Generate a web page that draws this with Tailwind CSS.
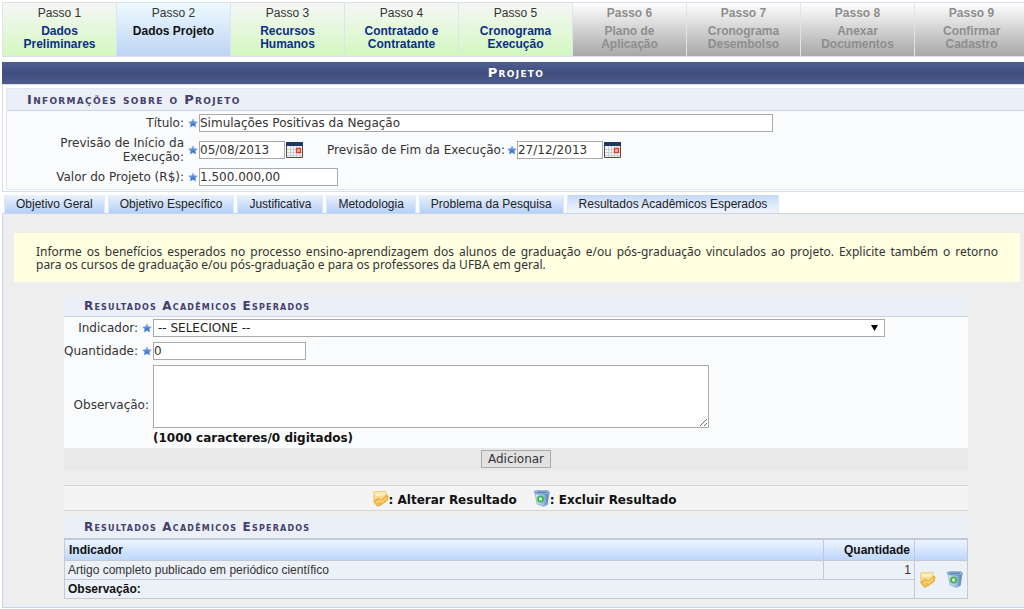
<!DOCTYPE html>
<html lang="pt-BR">
<head>
<meta charset="utf-8">
<title>Projeto</title>
<script src="https://cdn.jsdelivr.net/npm/@tailwindcss/browser@4"></script>
</head>
<body class="overflow-x-hidden bg-white font-['Verdana','DejaVu_Sans',sans-serif] text-[12px] leading-[14px] text-[#333]">
<svg class="absolute size-0" aria-hidden="true">
  <defs>
    <linearGradient id="gStar" x1="0" y1="0" x2="0" y2="1"><stop offset="0" stop-color="#8fbcf5"/><stop offset="1" stop-color="#1f55bf"/></linearGradient>
    <linearGradient id="gNote" x1="0" y1="0" x2="0" y2="1"><stop offset="0" stop-color="#fdf0c0"/><stop offset="1" stop-color="#f3c55c"/></linearGradient>
    <linearGradient id="gBin" x1="0" y1="0" x2="1" y2="0"><stop offset="0" stop-color="#d6e6f5"/><stop offset=".6" stop-color="#9dbedf"/><stop offset="1" stop-color="#4a79b2"/></linearGradient>
  </defs>
  <symbol id="star" viewBox="0 0 10 10"><path d="M5 .8 6.3 3.6 9.4 4 7.2 6.1 7.8 9.1 5 7.6 2.2 9.1 2.8 6.1.6 4 3.7 3.6Z" fill="url(#gStar)" stroke="#7fa9ea" stroke-width=".5"/></symbol>
  <symbol id="calendar" viewBox="0 0 17 16"><path d="M.5 .5h16v15H.5z" fill="#f3f4f6" stroke="#554b45"/><path d="M0 0h17v4H0z" fill="#1f3763"/><path d="M1 7.5h15M1 10.5h15M1 13.5h15M4.5 4v11M7.5 4v11M10.5 4v11M13.5 4v11" stroke="#c3c8cf" stroke-width=".8"/><path d="M10.5 6.5h4v4h-4z" fill="#f9b9ac" stroke="#e2402d" stroke-width="1.3"/></symbol>
  <symbol id="edit" viewBox="0 0 17 17"><path d="M1.5 2 14 1.200l.6 8-4.600 4-8-2z" fill="url(#gNote)" stroke="#e9c470" stroke-width=".8"/><path d="M4 5l7-.5" stroke="#fff8d8" stroke-width="1.3"/><path d="M1.5 11.500 6.500 8.500l3 2 5-5.500 1.700 1-1 4.500L9 15l-3.500 1.500z" fill="#f5bd45" stroke="#d29a34" stroke-width=".6"/><path d="M4.500 12.500l3-2 2.500 1.500 4-4" fill="none" stroke="#ffe7a6"/></symbol>
  <symbol id="bin" viewBox="0 0 17 17"><path d="M2 3h14l-1.500 11.500-4 2-6.500-2.500z" fill="url(#gBin)" stroke="#7d9fc8" stroke-width=".6"/><path d="M1 1.500 4 .7h11l1.500 1.500-1 2.300-13-.8z" fill="#8fb6e0" stroke="#5783b4" stroke-width=".6"/><path d="M4 2.300h10" stroke="#4f77a6"/><circle cx="7.500" cy="9" r="2.600" fill="#e6f8e2" stroke="#3cb84a" stroke-width="1.800"/></symbol>
</svg>

<main class="-mr-1.5 ml-0.5 pt-0.5">
  <ol class="mr-0.5 grid h-[55px] grid-cols-9 border-y border-[#dcdff0] text-center font-['Liberation_Sans',Arial,sans-serif] leading-[13px] *:flex *:flex-col *:gap-[5px] *:border-l *:border-[#dfe3ee] *:pt-1">
    <li class="bg-linear-to-b from-[#f6f6f6] to-[#d3f8c0]"><span>Passo 1</span><a href="#" class="px-4 font-bold text-[#0a2f85]">Dados Preliminares</a></li>
    <li class="bg-linear-to-b from-[#eefaff] to-[#bdd4f3]"><span>Passo 2</span><a href="#" class="font-bold text-[#111]" aria-current="step">Dados Projeto</a></li>
    <li class="bg-linear-to-b from-[#f6f6f6] to-[#d3f8c0]"><span>Passo 3</span><a href="#" class="px-7 font-bold text-[#0a2f85]">Recursos Humanos</a></li>
    <li class="bg-linear-to-b from-[#f6f6f6] to-[#d3f8c0]"><span>Passo 4</span><a href="#" class="px-4 font-bold text-[#0a2f85]">Contratado e Contratante</a></li>
    <li class="bg-linear-to-b from-[#f6f6f6] to-[#d3f8c0]"><span>Passo 5</span><a href="#" class="px-4 font-bold text-[#0a2f85]">Cronograma Execução</a></li>
    <li class="bg-linear-to-b from-white to-[#a8a8a8] font-bold text-[#8e8e8e]"><span>Passo 6</span><span class="px-7">Plano de Aplicação</span></li>
    <li class="bg-linear-to-b from-white to-[#a8a8a8] font-bold text-[#8e8e8e]"><span>Passo 7</span><span class="px-4">Cronograma Desembolso</span></li>
    <li class="bg-linear-to-b from-white to-[#a8a8a8] font-bold text-[#8e8e8e]"><span>Passo 8</span><span class="px-4">Anexar Documentos</span></li>
    <li class="bg-linear-to-b from-white to-[#a8a8a8] font-bold text-[#8e8e8e]"><span>Passo 9</span><span class="px-7">Confirmar Cadastro</span></li>
  </ol>

  <h1 class="mt-[5px] h-[22px] bg-linear-to-b from-[#4f5f90] via-[#404e80] to-[#4c5b8b] text-center text-[13px] leading-[22px] font-bold tracking-widest text-white [font-variant:small-caps]">Projeto</h1>

  <form class="border border-[#d8dde9] p-[3px] pb-px">
    <section class="border border-[#e3e6ee] bg-[#fafbfd]">
      <h2 class="h-[22px] border-b border-[#ccd5e5] bg-[#ebeff7] pl-5 text-[13px] leading-[22px] font-bold tracking-widest text-[#444068] [font-variant:small-caps]">Informações sobre o Projeto</h2>
      <div class="grid grid-cols-[177px_15px_1fr] items-center pt-[3px] pb-[3px]">
        <label for="titulo" class="text-right">Título:</label>
        <svg class="ml-1 size-2.5"><use href="#star"/></svg>
        <input id="titulo" value="Simulações Positivas da Negação" class="h-[18px] w-[574px] border border-[#aaa] bg-white">
        <label for="inicio" class="py-1 pl-10 text-right">Previsão de Início da Execução:</label>
        <svg class="ml-1 size-2.5"><use href="#star"/></svg>
        <div class="flex items-center">
          <input id="inicio" value="05/08/2013" class="h-[18px] w-[86px] border border-[#aaa] bg-white">
          <button type="button" aria-label="Abrir calendário" class="ml-px"><svg class="h-4 w-[17px]"><use href="#calendar"/></svg></button>
          <label for="fim" class="ml-6">Previsão de Fim da Execução:</label>
          <svg class="ml-0.5 size-2.5"><use href="#star"/></svg>
          <input id="fim" value="27/12/2013" class="h-[18px] w-[86px] border border-[#aaa] bg-white">
          <button type="button" aria-label="Abrir calendário" class="ml-px"><svg class="h-4 w-[17px]"><use href="#calendar"/></svg></button>
        </div>
        <label for="valor" class="text-right">Valor do Projeto (R$):</label>
        <svg class="ml-1 size-2.5"><use href="#star"/></svg>
        <input id="valor" value="1.500.000,00" class="h-[18px] w-[139px] border border-[#aaa] bg-white">
      </div>
    </section>
  </form>

  <nav class="flex gap-[3px] px-0.5 pt-[3px] font-['Liberation_Sans',Arial,sans-serif] leading-[18px] text-[#222] *:h-[18px] *:border-x *:border-[#dfe9fa] *:bg-linear-to-b *:px-[11px]">
    <a href="#" class="from-[#ebf2fd] to-[#b6d0f8]">Objetivo Geral</a>
    <a href="#" class="from-[#ebf2fd] to-[#b6d0f8]">Objetivo Específico</a>
    <a href="#" class="from-[#ebf2fd] to-[#b6d0f8]">Justificativa</a>
    <a href="#" class="from-[#ebf2fd] to-[#b6d0f8]">Metodologia</a>
    <a href="#" class="from-[#ebf2fd] to-[#b6d0f8]">Problema da Pesquisa</a>
    <a href="#" class="from-[#c5daf9] to-[#f2f5fb]" aria-current="page">Resultados Acadêmicos Esperados</a>
  </nav>

  <section class="border border-[#c6d6f0] bg-[#eee] pt-[19px] pb-2">
    <p class="mr-[9px] ml-[11px] bg-[#ffffe1] px-[22px] pt-3 pb-[11px] text-justify font-['Noto_Sans',sans-serif] leading-[13px]">Informe os benefícios esperados no processo ensino-aprendizagem dos alunos de graduação e/ou pós-graduação vinculados ao projeto. Explicite também o retorno para&nbsp;os&nbsp;cursos de graduação e/ou pós-graduação e para os professores da UFBA em geral.</p>

    <div class="mx-[61px] mt-[13px]">
      <form>
        <h2 class="h-[22px] border-b border-[#ccd5e5] bg-[#ebeff7] pl-5 text-[12px] leading-[22px] font-bold tracking-widest text-[#444068] [font-variant:small-caps]">Resultados Acadêmicos Esperados</h2>
        <div class="grid grid-cols-[74px_15px_1fr] items-center gap-y-[5px] bg-[#fafbfd] pt-0.5 pb-[3px]">
          <label for="indicador" class="justify-self-end whitespace-nowrap">Indicador:</label>
          <svg class="ml-1 size-2.5"><use href="#star"/></svg>
          <div class="relative w-[732px]">
            <select id="indicador" class="block h-[18px] w-full appearance-none border border-[#aaa] bg-white pl-1 text-[#222]"><option>-- SELECIONE --</option></select>
            <svg viewBox="0 0 7 6" class="pointer-events-none absolute top-1.5 right-[7px] h-1.5 w-[7px]"><path d="M0 0h7L3.5 6z" fill="#000"/></svg>
          </div>
          <label for="quantidade" class="justify-self-end whitespace-nowrap">Quantidade:</label>
          <svg class="ml-1 size-2.5"><use href="#star"/></svg>
          <input id="quantidade" value="0" class="h-[18px] w-[153px] border border-[#aaa] bg-white">
          <label for="observacao" class="col-span-2 pr-1 text-right whitespace-nowrap">Observação:</label>
          <div>
            <textarea id="observacao" class="block h-[63px] w-[556px] border border-[#aaa] bg-white"></textarea>
            <strong class="mt-[3px] block text-[#111]">(1000 caracteres/0 digitados)</strong>
          </div>
        </div>
        <div class="flex justify-center bg-[#e9e9e9] py-0.5">
          <button type="button" class="h-[18px] border border-[#aaa] bg-[#e2e2e2] px-1.5 leading-[16px]">Adicionar</button>
        </div>
      </form>

      <div class="mt-[15px] flex h-[26px] items-center justify-center gap-4 border-y border-[#d6d6d6] bg-[#f4f4f4] pt-1 pl-4 font-bold text-[#111]">
        <span class="flex items-center"><svg class="mb-1 size-[17px]"><use href="#edit"/></svg>: Alterar Resultado</span>
        <span class="flex items-center"><svg class="mb-1 size-[17px]"><use href="#bin"/></svg>: Excluir Resultado</span>
      </div>

      <h2 class="mt-[5px] h-[22px] bg-[#ebeff7] pl-5 text-[12px] leading-[23px] font-bold tracking-widest text-[#444068] [font-variant:small-caps]">Resultados Acadêmicos Esperados</h2>
      <table class="w-full border-collapse border border-t-2 border-[#c3cad6] bg-[#ecf0f7] font-['Liberation_Sans',Arial,sans-serif]">
        <thead>
          <tr class="h-[21px] bg-linear-to-b from-[#f0f6ff] to-[#bdd7fb] text-[#111]">
            <th class="border border-[#c3cad6] px-1 text-left">Indicador</th>
            <th class="w-[91px] border border-[#c3cad6] px-1 text-right">Quantidade</th>
            <th class="w-[53px] border border-[#c3cad6]"></th>
          </tr>
        </thead>
        <tbody>
          <tr class="h-[19px]">
            <td class="border border-[#c3cad6] px-[3px]">Artigo completo publicado em periódico científico</td>
            <td class="border border-[#c3cad6] px-[3px] text-right">1</td>
            <td rowspan="2" class="border border-[#c3cad6] px-1"><div class="flex justify-between"><button type="button" aria-label="Alterar"><svg class="size-[17px]"><use href="#edit"/></svg></button><button type="button" aria-label="Excluir"><svg class="size-[17px]"><use href="#bin"/></svg></button></div></td>
          </tr>
          <tr class="h-[19px]"><td colspan="2" class="border border-[#c3cad6] px-[3px] font-bold text-[#111]">Observação:</td></tr>
        </tbody>
      </table>
    </div>
  </section>
</main>
</body>
</html>
